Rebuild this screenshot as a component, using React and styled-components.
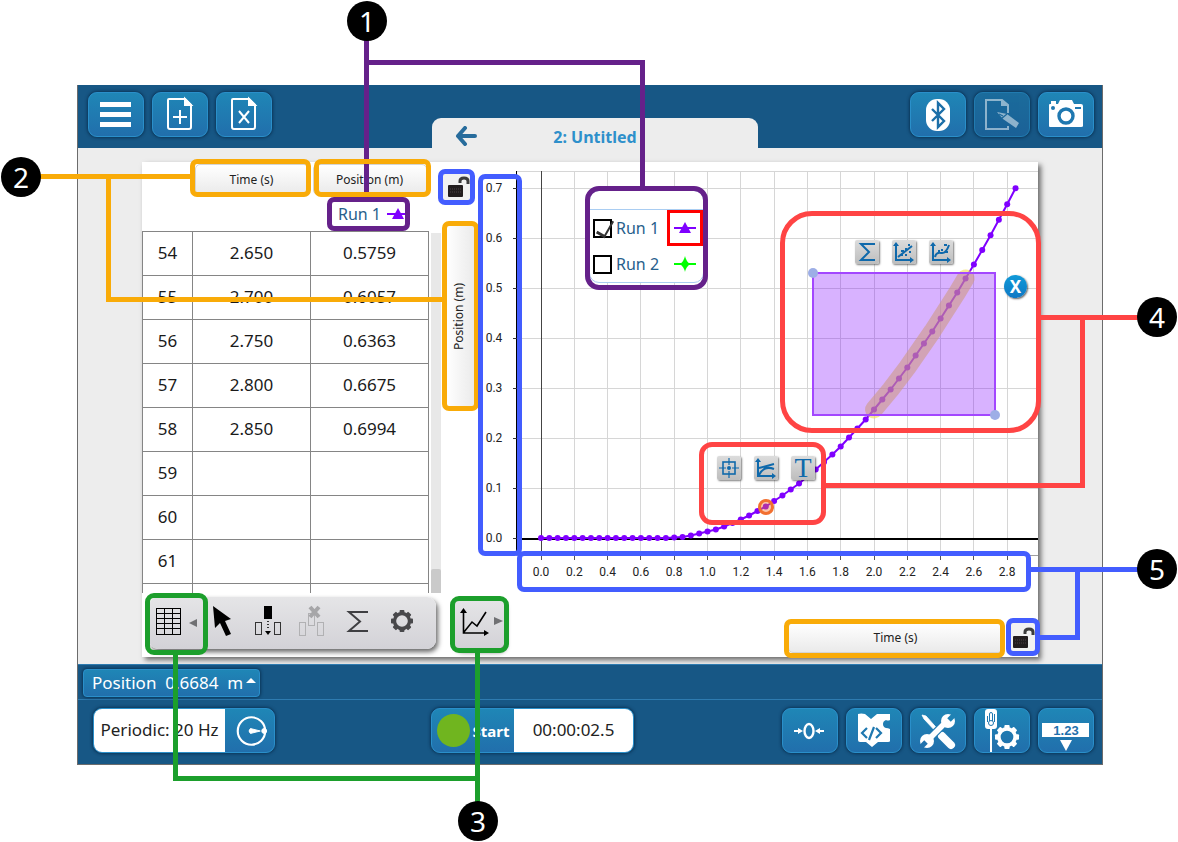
import React from "react";
import styled, { createGlobalStyle, css } from "styled-components";

const GlobalStyle = createGlobalStyle`
  * {
    box-sizing: border-box;
  }
  body {
    margin: 0;
    background: #ffffff;
    font-family: "Noto Sans", "Open Sans", sans-serif;
  }
  button, input {
    margin: 0;
    padding: 0;
    font-family: inherit;
  }
`;

const STEP = 0.05;
const positions = [
  0, 0, 0, 0, 0, 0, 0, 0, 0, 0, 0, 0, 0, 0, 0, 0, 0.001, 0.002, 0.005, 0.009,
  0.013, 0.017, 0.023, 0.03, 0.037, 0.045, 0.054, 0.063, 0.074, 0.085, 0.097,
  0.109, 0.123, 0.137, 0.152, 0.167, 0.183, 0.201, 0.219, 0.237, 0.257, 0.277,
  0.297, 0.319, 0.341, 0.365, 0.389, 0.413, 0.439, 0.465, 0.491, 0.519, 0.547,
  0.5759, 0.6057, 0.6363, 0.6675, 0.6994,
];

const rows = [
  { id: 54, time: "2.650", position: "0.5759" },
  { id: 55, time: "2.700", position: "0.6057" },
  { id: 56, time: "2.750", position: "0.6363" },
  { id: 57, time: "2.800", position: "0.6675" },
  { id: 58, time: "2.850", position: "0.6994" },
  { id: 59, time: "", position: "" },
  { id: 60, time: "", position: "" },
  { id: 61, time: "", position: "" },
  { id: "", time: "", position: "" },
];

const PURPLE = "#65218a";
const ORANGE = "#f9ab08";
const GREEN = "#1c9f2c";
const RED = "#ff4444";
const BLUE = "#435dff";

const frames = [
  { x: 327, y: 197, w: 83, h: 34, r: 7, color: PURPLE },
  { x: 585, y: 186, w: 123, h: 104, r: 14, color: PURPLE },
  { x: 190, y: 159, w: 121, h: 38, r: 7, color: ORANGE },
  { x: 314, y: 159, w: 117, h: 38, r: 7, color: ORANGE },
  { x: 442, y: 221, w: 37, h: 190, r: 7, color: ORANGE },
  { x: 784, y: 619, w: 221, h: 39, r: 7, color: ORANGE },
  { x: 145, y: 593, w: 63, h: 62, r: 9, color: GREEN },
  { x: 450, y: 596, w: 59, h: 57, r: 9, color: GREEN },
  { x: 780, y: 211, w: 261, h: 222, r: 32, color: RED },
  { x: 699, y: 442, w: 127, h: 83, r: 13, color: RED },
  { x: 438, y: 169, w: 37, h: 36, r: 7, color: BLUE },
  { x: 478, y: 174, w: 44, h: 382, r: 7, color: BLUE },
  { x: 517, y: 551, w: 514, h: 41, r: 7, color: BLUE },
  { x: 1006, y: 618, w: 34, h: 38, r: 7, color: BLUE },
];

const lines = [
  { x: 364, y: 38, length: 160, vertical: true, color: PURPLE },
  { x: 364, y: 60, length: 281, color: PURPLE },
  { x: 640, y: 60, length: 127, vertical: true, color: PURPLE },
  { x: 38, y: 174, length: 154, color: ORANGE },
  { x: 106, y: 174, length: 128, vertical: true, color: ORANGE },
  { x: 106, y: 297, length: 338, color: ORANGE },
  { x: 173, y: 653, length: 128, vertical: true, color: GREEN },
  { x: 173, y: 776, length: 307, color: GREEN },
  { x: 475, y: 651, length: 152, vertical: true, color: GREEN },
  { x: 1039, y: 315, length: 100, color: RED },
  { x: 1080, y: 315, length: 173, vertical: true, color: RED },
  { x: 824, y: 483, length: 261, color: RED },
  { x: 1029, y: 567, length: 110, color: BLUE },
  { x: 1075, y: 567, length: 73, vertical: true, color: BLUE },
  { x: 1035, y: 635, length: 45, color: BLUE },
];

const badges = [
  { n: 1, x: 347, y: 1 },
  { n: 2, x: 1, y: 157 },
  { n: 3, x: 458, y: 801 },
  { n: 4, x: 1137, y: 297 },
  { n: 5, x: 1137, y: 549 },
];

/* ---------- icons ---------- */

const MenuIcon = () => (
  <svg width="56" height="45" viewBox="0 0 56 45" fill="#fff">
    <rect x="12" y="10" width="31" height="5" />
    <rect x="12" y="20" width="31" height="5" />
    <rect x="12" y="30" width="31" height="5" />
  </svg>
);

const FileIcon = ({ children }) => (
  <svg width="56" height="45" viewBox="0 0 56 45" fill="none" stroke="#fff" strokeWidth="2">
    <path d="M17 7h16l6 6v22q0 2-2 2H18q-2 0-2-2V8q0-1 1-1z" />
    <path d="M33 7v6h6z" fill="#fff" />
    {children}
  </svg>
);

const BluetoothIcon = () => (
  <svg width="56" height="45" viewBox="0 0 56 45" fill="none">
    <rect x="16" y="7" width="24" height="32" rx="11" fill="#fff" />
    <path d="M22 17l12 12-6 6V11l6 6-12 12" stroke="#1c6fa8" strokeWidth="2.4" />
  </svg>
);

const JournalIcon = () => (
  <svg width="56" height="45" viewBox="0 0 56 45" fill="none" opacity="0.5">
    <path d="M34 21v-8l-6-5H12v29h22v-3" stroke="#fff" strokeWidth="2" />
    <path d="M27 7v7h7z" fill="#fff" />
    <path d="M23 20l10 2 12 9-3 5-13-9z" fill="#fff" />
    <path d="M27 27l6-5M25 22l4 2" stroke="#1b679c" strokeWidth="1.200" />
  </svg>
);

const CameraIcon = () => (
  <svg width="56" height="45" viewBox="0 0 56 45">
    <path d="M12 12h8l2-4h12l2 4h7q2 0 2 2v20q0 1-2 1H12q-1 0-1-1V13q0-1 1-1z" fill="#fff" />
    <rect x="13" y="9" width="5" height="4" fill="#fff" />
    <circle cx="28" cy="24" r="7" fill="none" stroke="#1f78b0" strokeWidth="3.4" />
    <circle cx="15" cy="16" r="2" fill="#1f78b0" />
    <rect x="37" y="15" width="6" height="2" fill="#1f78b0" />
  </svg>
);

const BackIcon = () => (
  <svg width="22" height="20" viewBox="0 0 22 20" fill="none" stroke="#276c9c" strokeWidth="4" strokeLinecap="round" strokeLinejoin="round">
    <path d="M10 2L3 10l7 8M3 10h17" />
  </svg>
);

const LockIcon = () => (
  <svg width="24" height="24" viewBox="0 0 24 24">
    <path d="M14 8V6q0-3 4-3t4 3v3" fill="none" stroke="#3c3c3c" strokeWidth="3" />
    <rect x="2" y="10" width="15" height="12" rx="1" fill="#221d1e" />
    <path d="M4 14h11M4 17h11" stroke="#4a4344" strokeDasharray="1 1" />
  </svg>
);

const SeriesMark = ({ color, diamond }) => (
  <svg width="22" height="16" viewBox="0 0 22 16" fill={color}>
    <rect x="0" y="7" width="22" height="2" />
    {diamond ? <path d="M11 0q1 5 5 8-4 3-5 8-1-5-5-8 4-3 5-8z" /> : <path d="M11 2l6 11H5z" />}
  </svg>
);

const GridIcon = () => (
  <svg width="50" height="50" viewBox="0 0 50 50" fill="none" stroke="#000" strokeWidth="1">
    <rect x="7.500" y="11.500" width="24" height="26" />
    <path d="M7 16.500h25M7 21.500h25M7 26.500h25M7 31.500h25M15.500 11v27M23.500 11v27" />
    <path d="M40 26l8-4v8z" fill="#707073" stroke="none" />
  </svg>
);

const CursorIcon = () => (
  <svg width="45" height="50" viewBox="0 0 45 50">
    <path d="M8 9l18 13-6 2 6 13-5 2-6-13-5 5z" fill="#000" />
  </svg>
);

const InsertColumnIcon = () => (
  <svg width="45" height="50" viewBox="0 0 45 50" fill="none" stroke="#333">
    <rect x="14" y="9" width="8" height="13" fill="#000" stroke="none" />
    <rect x="5.500" y="25.500" width="6" height="12" />
    <rect x="24.500" y="25.500" width="6" height="12" />
    <path d="M18 24v9" strokeWidth="2" strokeDasharray="1 2" />
    <path d="M15 34h6l-3 4z" fill="#000" stroke="none" />
  </svg>
);

const DeleteColumnIcon = () => (
  <svg width="45" height="50" viewBox="0 0 45 50" fill="none" stroke="#b1b1b3">
    <rect x="4.500" y="25.500" width="6" height="13" />
    <rect x="13.500" y="16.500" width="6" height="12" />
    <rect x="22.500" y="25.500" width="6" height="13" />
    <path d="M15 10l9 10M24 10l-9 10" stroke="#a6a6a8" strokeWidth="4" />
  </svg>
);

const SigmaIcon = () => (
  <svg width="45" height="50" viewBox="0 0 45 50" fill="none" stroke="#3f3f42">
    <path d="M28 15H9l11 9.500L9 34h19" strokeWidth="2" />
  </svg>
);

const gearTeeth = [0, 45, 90, 135, 180, 225, 270, 315];

const Gear = ({ cx, cy, r, color }) => (
  <g transform={`translate(${cx} ${cy})`}>
    <circle r={r * 0.68} fill="none" stroke={color} strokeWidth={r * 0.3} />
    {gearTeeth.map((a) => (
      <rect key={a} x={-r * 0.22} y={-r} width={r * 0.44} height={r * 0.3} rx={r * 0.08} fill={color} transform={`rotate(${a})`} />
    ))}
  </g>
);

const GearIcon = () => (
  <svg width="45" height="50" viewBox="0 0 45 50">
    <Gear cx={17} cy={24} r={11} color="#48484b" />
  </svg>
);

const GraphIcon = () => (
  <svg width="50" height="50" viewBox="0 0 50 50" fill="none" stroke="#000" strokeWidth="1.600">
    <path d="M9.500 12v22H31M10 33l8-10 5 4 9-14" />
    <path d="M6 14l3.500-5 3.500 5zM30 31l5 3-5 3z" fill="#000" stroke="none" />
    <path d="M40 18l9 4-9 4z" fill="#707073" stroke="none" />
  </svg>
);

const PeriodIcon = () => (
  <svg width="50" height="44" viewBox="0 0 50 44" fill="none" stroke="#fff">
    <circle cx="27" cy="22" r="14" strokeWidth="2.200" />
    <circle cx="40" cy="22" r="2.500" fill="#fff" />
    <path d="M26 19.500l10 2.500-10 2.500q-3-2.500 0-5z" fill="#fff" />
  </svg>
);

const ZeroIcon = () => (
  <svg width="56" height="45" viewBox="0 0 56 45" fill="none" stroke="#fff" strokeWidth="2.400">
    <ellipse cx="27" cy="23" rx="4.500" ry="7" />
    <path d="M12 23h6M42 23h-6" strokeWidth="2" />
    <path d="M16 20l5 3-5 3zM38 20l-5 3 5 3z" fill="#fff" stroke="none" />
  </svg>
);

const CodeIcon = () => (
  <svg width="56" height="45" viewBox="0 0 56 45">
    <path d="M12 6q3-1 7 0l6 5 6-5h13v6q-2 1-4 0-3 1-3 4t3 4q2 0 4 1v12q0 1-2 1H32l-6 5-6-5h-6q-2 0-2-2z" fill="#fff" />
    <path d="M21 20l-5 5 5 5M30 20l5 5-5 5M28 19l-5 13" fill="none" stroke="#1f78b0" strokeWidth="2.200" />
  </svg>
);

const ToolsIcon = () => (
  <svg width="56" height="45" viewBox="0 0 56 45" fill="none" stroke="#fff">
    <path d="M12 7l4 1 16 18-2 2-16-17z" fill="#fff" strokeWidth="0.800" />
    <path d="M32 28l9 9" strokeWidth="8" strokeLinecap="round" />
    <path d="M18 32L37 13" stroke="#2079b1" strokeWidth="8" />
    <path d="M17 33L38 12" strokeWidth="5.500" />
    <circle cx="38" cy="13" r="7" fill="#fff" stroke="none" />
    <circle cx="17" cy="33" r="7" fill="#fff" stroke="none" />
    <path d="M39 12l8-8" stroke="#1f82b4" strokeWidth="5" />
    <path d="M16 34l-8 8" stroke="#2172ad" strokeWidth="5" />
  </svg>
);

const SensorIcon = () => (
  <svg width="56" height="45" viewBox="0 0 56 45">
    <rect x="11" y="1" width="12" height="20" rx="3" fill="#fff" />
    <path d="M17 20v24" stroke="#fff" strokeWidth="2" />
    <path d="M15.500 13V6q0-1.500 1.500-1.500T18.500 6v7M20.500 6v8M13.500 8v6" fill="none" stroke="#1f78b0" strokeWidth="1" />
    <circle cx="17" cy="15" r="2.500" fill="none" stroke="#1f78b0" />
    <Gear cx={33} cy={29} r={12} color="#fff" />
  </svg>
);

const ReadoutIcon = () => (
  <svg width="56" height="45" viewBox="0 0 56 45">
    <rect x="4" y="15" width="47" height="14" fill="#fff" />
    <text x="28" y="27" textAnchor="middle" fontFamily="Liberation Sans, sans-serif" fontWeight="700" fontSize="13" fill="#1f70ac">
      1.23
    </text>
    <path d="M22 32h12l-6 11z" fill="#fff" />
  </svg>
);

const ToolGlyph = ({ kind }) => (
  <svg width="24" height="24" viewBox="0 0 24 24" fill="none" stroke="#0f69ab" strokeWidth="2">
    {kind === "sigma" && <path d="M20 4H6l8 8-8 8h14" />}
    {["linear", "curve", "slope"].includes(kind) && (
      <>
        <path d="M4 4v16h15" />
        <path d="M1 6l3-4 3 4zM18 17l4 3-4 3z" fill="#0f69ab" stroke="none" />
      </>
    )}
    {kind === "linear" && <path d="M6 17L20 6M9 11h3M13 9h2M17 12h2M13 15h2M16 5h2M8 15h3" strokeWidth="2" />}
    {kind === "curve" && <path d="M6 17q1-5 6-4t8-8M9 11h2M12 10h2M16 12h3M15 5h3" strokeWidth="2" />}
    {kind === "slope" && <path d="M5 19q5-10 15-6M5 12l15-4" strokeWidth="2" />}
    {kind === "target" && (
      <>
        <rect x="6" y="6" width="12" height="12" strokeWidth="1.600" />
        <path d="M12 2v7M12 15v7M2 12h7M15 12h7" strokeWidth="1.200" />
        <circle cx="12" cy="12" r="2" fill="#0f69ab" stroke="none" />
      </>
    )}
  </svg>
);

/* ---------- chart ---------- */

const px = (t) => 63 + t * 166.5;
const py = (v) => 376 - v * 500;

const xTicks = Array.from({ length: 15 }, (_, i) => i * 0.2);
const yTicks = Array.from({ length: 8 }, (_, i) => i * 0.1);
const points = positions.map((v, i) => [px(i * STEP), py(v)]);
const path = points.map((p) => p.join(",")).join(" ");
const selected = points.slice(40, 52).map((p) => p.join(",")).join(" ");

const Plot = () => (
  <PlotSvg viewBox="0 0 560 433" role="img" aria-label="Position against time">
    <g stroke="#d6d6d6" shapeRendering="crispEdges">
      {xTicks.slice(1).map((t) => (
        <line key={t} x1={px(t)} x2={px(t)} y1="9" y2="393" />
      ))}
      {yTicks.slice(1).map((v) => (
        <line key={v} x1="38" x2="560" y1={py(v)} y2={py(v)} />
      ))}
      <line x1="38" x2="560" y1="9.500" y2="9.500" />
      <line x1="38" x2="560" y1="393.500" y2="393.500" stroke="#a0a0a0" />
    </g>
    <g stroke="#000" shapeRendering="crispEdges">
      <line x1="38.500" x2="38.500" y1="9" y2="393" strokeWidth="1" />
      <line x1="63" x2="63" y1="9" y2="398" stroke="#444" />
      <line x1="38" x2="560" y1="377" y2="377" strokeWidth="2" />
      {xTicks.map((t) => (
        <line key={t} x1={px(t)} x2={px(t)} y1="393" y2="398" stroke="#555" />
      ))}
      {yTicks.map((v) => (
        <line key={v} x1="35" x2="39" y1={py(v)} y2={py(v)} stroke="#333" />
      ))}
    </g>
    <g fontFamily="Roboto, sans-serif" fontSize="12" fill="#222" textAnchor="middle">
      {xTicks.map((t) => (
        <text key={t} x={px(t)} y="414">{t.toFixed(1)}</text>
      ))}
      {yTicks.map((v) => (
        <text key={v} x="16" y={py(v) + 4}>{v.toFixed(1)}</text>
      ))}
    </g>
    <polyline points={path} fill="none" stroke="#7f00ff" strokeWidth="2" />
    {points.map(([x, y]) => (
      <circle key={x} cx={x} cy={y} r="3" fill="#7f00ff" />
    ))}
    <polyline points={selected} fill="none" stroke="#f0dc50" strokeOpacity="0.6" strokeWidth="18" strokeLinecap="round" strokeLinejoin="round" />
    <rect x="335" y="111" width="182" height="142" fill="#7f00ff" fillOpacity="0.3" stroke="#a347ff" strokeWidth="2" />
    <circle cx="335" cy="111" r="5" fill="#9daee6" />
    <circle cx="517" cy="253" r="5" fill="#9daee6" />
    <circle cx="288" cy="345" r="6.500" fill="#f27030" fillOpacity="0.4" stroke="#f27030" strokeWidth="3" />
  </PlotSvg>
);

const Lock = () => (
  <LockButton aria-label="Unlock axis scale">
    <LockIcon />
  </LockButton>
);

export default function App() {
  return (
    <Figure>
      <GlobalStyle />
      <Window>
        <TopBar>
          <ButtonGroup>
            <BarButton aria-label="Menu"><MenuIcon /></BarButton>
            <BarButton aria-label="New page">
              <FileIcon><path d="M28 18v14M21 25h14" /></FileIcon>
            </BarButton>
            <BarButton aria-label="Delete page">
              <FileIcon><path d="M23 19l10 12M33 19L23 31" /></FileIcon>
            </BarButton>
          </ButtonGroup>
          <Tab>
            <BackButton aria-label="Back"><BackIcon /></BackButton>
            <TabTitle>2: Untitled</TabTitle>
          </Tab>
          <ButtonGroup $end>
            <BarButton aria-label="Bluetooth"><BluetoothIcon /></BarButton>
            <BarButton aria-label="Journal" $dim><JournalIcon /></BarButton>
            <BarButton aria-label="Snapshot"><CameraIcon /></BarButton>
          </ButtonGroup>
        </TopBar>

        <Workspace>
          <Sheet>
            <TablePanel>
              <TableScroll>
                <DataTable>
                  <colgroup>
                    <col width="50" />
                    <col width="118" />
                    <col width="118" />
                  </colgroup>
                  <thead>
                    <tr>
                      <th />
                      <th><MeasureButton>Time (s)</MeasureButton></th>
                      <th><MeasureButton>Position (m)</MeasureButton></th>
                    </tr>
                    <tr>
                      <th />
                      <th />
                      <th>
                        <RunLabel>
                          Run 1 <SeriesMark color="#7f00ff" />
                        </RunLabel>
                      </th>
                    </tr>
                  </thead>
                  <tbody>
                    {rows.map((row, i) => (
                      <tr key={i}>
                        <td>{row.id}</td>
                        <td>{row.time}</td>
                        <td>{row.position}</td>
                      </tr>
                    ))}
                  </tbody>
                </DataTable>
              </TableScroll>
              <ScrollTrack><ScrollThumb /></ScrollTrack>
              <TableTools>
                <ToolButton $wide aria-label="Table"><GridIcon /></ToolButton>
                <ToolButton aria-label="Select"><CursorIcon /></ToolButton>
                <ToolButton aria-label="Insert column"><InsertColumnIcon /></ToolButton>
                <ToolButton aria-label="Delete column"><DeleteColumnIcon /></ToolButton>
                <ToolButton aria-label="Statistics"><SigmaIcon /></ToolButton>
                <ToolButton aria-label="Options"><GearIcon /></ToolButton>
              </TableTools>
            </TablePanel>

            <GraphPanel>
              <AxisStrip>
                <Lock />
                <VerticalMeasure>Position (m)</VerticalMeasure>
              </AxisStrip>
              <PlotArea>
                <Plot />
                <Legend>
                  <LegendRow>
                    <CheckLabel>
                      <Check type="checkbox" defaultChecked />
                      Run 1
                    </CheckLabel>
                    <MarkCell $active><SeriesMark color="#7f00ff" /></MarkCell>
                  </LegendRow>
                  <LegendRow>
                    <CheckLabel>
                      <Check type="checkbox" />
                      Run 2
                    </CheckLabel>
                    <MarkCell><SeriesMark color="#00ff00" diamond /></MarkCell>
                  </LegendRow>
                </Legend>
                <SelectionTools>
                  <PlotTool aria-label="Statistics"><ToolGlyph kind="sigma" /></PlotTool>
                  <PlotTool aria-label="Linear fit"><ToolGlyph kind="linear" /></PlotTool>
                  <PlotTool aria-label="Curve fit"><ToolGlyph kind="curve" /></PlotTool>
                </SelectionTools>
                <PointTools>
                  <PlotTool aria-label="Coordinates"><ToolGlyph kind="target" /></PlotTool>
                  <PlotTool aria-label="Slope"><ToolGlyph kind="slope" /></PlotTool>
                  <PlotTool aria-label="Annotation">T</PlotTool>
                </PointTools>
                <CloseButton aria-label="Remove selection">X</CloseButton>
              </PlotArea>
              <GraphFooter>
                <GraphToolButton aria-label="Graph"><GraphIcon /></GraphToolButton>
                <TimeAxis>
                  <MeasureButton>Time (s)</MeasureButton>
                  <Lock />
                </TimeAxis>
              </GraphFooter>
            </GraphPanel>
          </Sheet>
        </Workspace>

        <Readouts>
          <ReadoutButton>
            Position&nbsp; 0.6684&nbsp; m
            <Caret />
          </ReadoutButton>
        </Readouts>
        <Controls>
          <Split>
            <SplitValue $w={132}>Periodic: 20 Hz</SplitValue>
            <SplitButton $w={50} aria-label="Sample rate"><PeriodIcon /></SplitButton>
          </Split>
          <Split>
            <SplitButton $w={83}><RecordDot />Start</SplitButton>
            <SplitValue $w={120}>00:00:02.5</SplitValue>
          </Split>
          <ButtonGroup $end>
            <BarButton aria-label="Zero sensor"><ZeroIcon /></BarButton>
            <BarButton aria-label="Code"><CodeIcon /></BarButton>
            <BarButton aria-label="Hardware setup"><ToolsIcon /></BarButton>
            <BarButton aria-label="Sensor settings"><SensorIcon /></BarButton>
            <BarButton aria-label="Live data"><ReadoutIcon /></BarButton>
          </ButtonGroup>
        </Controls>
      </Window>

      <Callouts>
        {lines.map((l) => (
          <Leader key={`${l.x}-${l.y}-${l.length}`} {...toProps(l)} />
        ))}
        {frames.map((f) => (
          <Outline key={`${f.x}-${f.y}`} {...toProps(f)} />
        ))}
        {badges.map((b) => (
          <Badge key={b.n} $x={b.x} $y={b.y}>{b.n}</Badge>
        ))}
      </Callouts>
    </Figure>
  );
}

// styled-components keeps $-prefixed props away from the DOM
function toProps(item) {
  return Object.fromEntries(Object.entries(item).map(([k, v]) => [`$${k}`, v]));
}

/* ---------- styles ---------- */

const Figure = styled.main`
  position: relative;
  padding: 85px 75px 77px 77px;
`;

const Window = styled.div`
  border: 1px solid #6c6c6c;
  border-top: none;
  background: #ededed;
`;

const TopBar = styled.header`
  display: grid;
  grid-template-columns: 1fr 326px 336px;
  height: 63px;
  padding: 0 8px 0 10px;
  background: #175785;
`;

const ButtonGroup = styled.div`
  display: flex;
  gap: 8px;
  padding-top: 7px;
  justify-content: ${({ $end }) => ($end ? "flex-end" : "flex-start")};
`;

const blueFace = css`
  border: 1px solid #2a8fca;
  background: linear-gradient(#1f86b6, #216fac);
  box-shadow: 0 0 3px 1px rgba(5, 40, 70, 0.7);
  color: #ffffff;
`;

const BarButton = styled.button`
  ${blueFace}
  display: flex;
  align-items: center;
  justify-content: center;
  width: 56px;
  height: 45px;
  border-radius: 9px;
  overflow: hidden;
  ${({ $dim }) =>
    $dim &&
    css`
      border-color: #217bb0;
      background: linear-gradient(#1b6c9c, #1b6197);
    `}
  svg {
    flex: none;
  }
`;

const Tab = styled.div`
  display: grid;
  grid-template-columns: 1fr auto 1fr;
  align-items: center;
  align-self: end;
  height: 30px;
  padding-top: 8px;
  border-radius: 9px 9px 0 0;
  background: #ededed;
`;

const BackButton = styled.button`
  justify-self: start;
  height: 22px;
  margin-left: 23px;
  border: none;
  background: none;
`;

const TabTitle = styled.h1`
  margin: 0;
  font-size: 16px;
  line-height: 22px;
  font-weight: 700;
  color: #2e90cb;
`;

const Workspace = styled.div`
  padding: 14px 64px 7px;
`;

const Sheet = styled.div`
  display: grid;
  grid-template-columns: 300px 1fr;
  height: 495px;
  background: #ffffff;
  box-shadow: 3px 3px 5px rgba(0, 0, 0, 0.55);
`;

const TablePanel = styled.section`
  display: grid;
  grid-template-columns: 289px 10px;
  grid-template-rows: 431px 1fr;
`;

const TableScroll = styled.div`
  overflow: hidden;
`;

const DataTable = styled.table`
  width: 287px;
  table-layout: fixed;
  border-collapse: collapse;
  font-size: 17px;
  color: #1a1a1a;

  th {
    height: 35px;
    padding: 0 2px;
    font-weight: 400;
  }
  tr:nth-child(2) th {
    height: 34px;
  }
  td {
    height: 44px;
    padding: 0 0 2px;
    border: 1px solid #858585;
    text-align: center;
  }
`;

const MeasureButton = styled.button`
  display: block;
  width: 100%;
  height: 31px;
  padding-bottom: 1px;
  border: 1px solid #d4d4d4;
  border-radius: 5px;
  background: linear-gradient(#ffffff, #eaeaea);
  font-size: 12px;
  color: #222222;
`;

const RunLabel = styled.div`
  display: flex;
  align-items: center;
  justify-content: center;
  gap: 6px;
  padding-left: 8px;
  font-size: 16px;
  line-height: 28px;
  color: #27608c;
`;

const ScrollTrack = styled.div`
  display: flex;
  align-items: flex-end;
  margin-top: 71px;
  background: #e8e8e8;
`;

const ScrollThumb = styled.div`
  width: 100%;
  height: 24px;
  border-radius: 2px 2px 0 0;
  background: #cacaca;
`;

const toolFace = css`
  background: linear-gradient(#e5e5e7, #d3d2d7);
  box-shadow: 2px 3px 5px rgba(0, 0, 0, 0.6);
`;

const TableTools = styled.div`
  ${toolFace}
  display: flex;
  grid-column: 1 / -1;
  height: 52px;
  margin: 4px 5px 0 7px;
  border-radius: 9px;
`;

const ToolButton = styled.button`
  display: flex;
  align-items: flex-start;
  width: ${({ $wide }) => ($wide ? 56 : 45)}px;
  height: 52px;
  border: none;
  background: none;
`;

const GraphPanel = styled.section`
  display: grid;
  grid-template-columns: 36px 1fr;
  grid-template-rows: 433px 1fr;
`;

const AxisStrip = styled.div`
  display: flex;
  flex-direction: column;
  align-items: flex-start;
  padding-top: 9px;
`;

const LockButton = styled.button`
  display: flex;
  align-items: center;
  justify-content: center;
  flex: none;
  width: 31px;
  height: 32px;
  border: 1px solid #d9d9d9;
  border-radius: 5px;
  background: #f1f1f1;
`;

const VerticalMeasure = styled(MeasureButton)`
  width: 31px;
  height: 184px;
  margin: 21px 0 0 3px;
  padding: 0 0 0 4px;
  writing-mode: vertical-rl;
  transform: rotate(180deg);
  background: linear-gradient(to left, #ffffff, #eaeaea);
`;

const PlotArea = styled.div`
  position: relative;
`;

const PlotSvg = styled.svg`
  display: block;
  width: 100%;
  height: 433px;
`;

/* floats over the grid */
const Legend = styled.div`
  position: absolute;
  top: 28px;
  left: 111px;
  width: 115px;
  padding-top: 18px;
  border: 1px solid #a9cdf2;
  border-radius: 10px;
  background: #ffffff;
`;

const LegendRow = styled.div`
  display: flex;
  align-items: center;
  justify-content: space-between;
  height: 36px;
  &:first-child {
    height: 37px;
    border-top: 1px solid #a9cdf2;
  }
`;

const CheckLabel = styled.label`
  display: flex;
  align-items: center;
  gap: 4px;
  padding-left: 3px;
  font-size: 16px;
  color: #27608c;
`;

const Check = styled.input`
  appearance: none;
  position: relative;
  width: 19px;
  height: 19px;
  border: 2px solid #000000;
  background: #ffffff;
  &:checked::after {
    content: "";
    position: absolute;
    left: 5px;
    top: -3px;
    width: 8px;
    height: 16px;
    border: solid #333333;
    border-width: 0 2px 3px 0;
    transform: rotate(30deg);
  }
`;

const MarkCell = styled.span`
  display: flex;
  align-items: center;
  justify-content: center;
  width: 36px;
  height: 36px;
  border: 3px solid ${({ $active }) => ($active ? "#ff0000" : "transparent")};
`;

const PlotTools = styled.div`
  position: absolute;
  display: flex;
  gap: 13px;
`;

const SelectionTools = styled(PlotTools)`
  top: 78px;
  left: 377px;
`;

const PointTools = styled(PlotTools)`
  top: 294px;
  left: 239px;
`;

const PlotTool = styled.button`
  display: flex;
  align-items: center;
  justify-content: center;
  width: 24px;
  height: 24px;
  border: none;
  border-radius: 2px;
  background: linear-gradient(#dcdcdc, #bdbdbd);
  box-shadow: 1px 1px 2px rgba(0, 0, 0, 0.5);
  font-family: "Liberation Serif", serif;
  font-size: 28px;
  line-height: 24px;
  color: #0f69ab;
`;

const CloseButton = styled.button`
  position: absolute;
  top: 113px;
  left: 526px;
  width: 23px;
  height: 23px;
  border: none;
  border-radius: 50%;
  background: linear-gradient(#109ad8, #0f78c4);
  box-shadow: 1px 1px 2px rgba(0, 0, 0, 0.6);
  font-size: 17px;
  line-height: 23px;
  font-weight: 700;
  color: #ffffff;
`;

const GraphFooter = styled.div`
  display: flex;
  grid-column: 1 / -1;
  align-items: flex-start;
  justify-content: space-between;
  padding: 4px 0 0 12px;
`;

const GraphToolButton = styled.button`
  ${toolFace}
  width: 50px;
  height: 50px;
  border: none;
  border-radius: 7px;
`;

const TimeAxis = styled.div`
  display: flex;
  gap: 4px;
  width: 250px;
  padding-top: 23px;
`;

const Readouts = styled.div`
  height: 36px;
  padding: 4px 5px;
  border-top: 1px solid #2e7bb0;
  border-bottom: 1px solid #2e7bb0;
  background: #175785;
`;

const ReadoutButton = styled.button`
  ${blueFace}
  display: flex;
  justify-content: space-between;
  width: 177px;
  height: 28px;
  padding: 0 3px 0 8px;
  border-radius: 4px;
  font-size: 17px;
  line-height: 26px;
`;

const Caret = styled.span`
  height: 5px;
  margin-top: 8px;
  border: 5px solid transparent;
  border-top: none;
  border-bottom-color: #ffffff;
`;

const Controls = styled.footer`
  display: grid;
  grid-template-columns: 1fr 202px 461px;
  height: 64px;
  padding: 1px 8px 0 15px;
  background: #175785;
`;

const Split = styled.div`
  ${blueFace}
  display: flex;
  justify-self: start;
  height: 45px;
  margin-top: 7px;
  border-radius: 9px;
  overflow: hidden;
`;

const SplitValue = styled.div`
  width: ${({ $w }) => $w - 1}px;
  background: #ffffff;
  font-size: 17px;
  line-height: 41px;
  text-align: center;
  color: #222222;
`;

const SplitButton = styled.button`
  display: flex;
  align-items: center;
  justify-content: center;
  gap: 3px;
  width: ${({ $w }) => $w - 1}px;
  border: none;
  background: none;
  font-size: 15px;
  font-weight: 700;
  color: #ffffff;
`;

const RecordDot = styled.span`
  flex: none;
  width: 33px;
  height: 33px;
  border-radius: 50%;
  background: #70b51f;
`;

/* numbered callouts drawn over the window */
const Callouts = styled.div`
  position: absolute;
  inset: 0;
  pointer-events: none;
`;

const Outline = styled.div`
  position: absolute;
  left: ${({ $x }) => $x}px;
  top: ${({ $y }) => $y}px;
  width: ${({ $w }) => $w}px;
  height: ${({ $h }) => $h}px;
  border: 5px solid ${({ $color }) => $color};
  border-radius: ${({ $r }) => $r}px;
`;

const Leader = styled.div`
  position: absolute;
  left: ${({ $x }) => $x}px;
  top: ${({ $y }) => $y}px;
  width: ${({ $vertical, $length }) => ($vertical ? 5 : $length)}px;
  height: ${({ $vertical, $length }) => ($vertical ? $length : 5)}px;
  background: ${({ $color }) => $color};
`;

const Badge = styled.span`
  position: absolute;
  left: ${({ $x }) => $x}px;
  top: ${({ $y }) => $y}px;
  width: 40px;
  height: 40px;
  border-radius: 50%;
  background: #000000;
  font-size: 28px;
  line-height: 40px;
  text-align: center;
  color: #ffffff;
`;
